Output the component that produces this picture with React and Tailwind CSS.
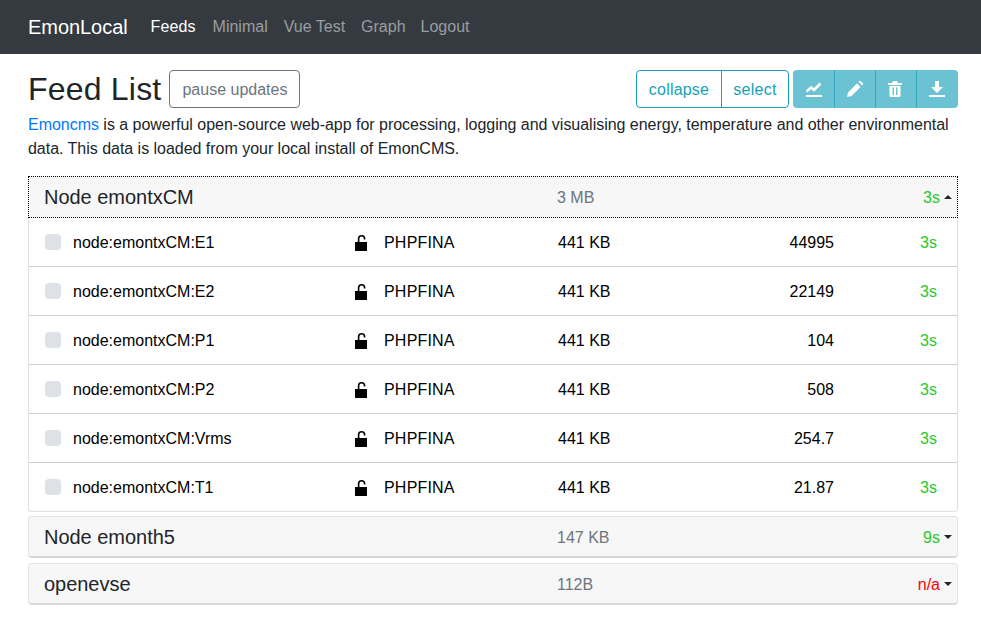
function Lock() {
  return (
    <svg width="14" height="18" viewBox="0 0 14 18" className="block">
      <path d="M1 9h12v8.500a.5.5 0 0 1-.5.5h-11a.5.5 0 0 1-.5-.5z" fill="#000" />
      <path d="M4.600 9V5.800a3 3 0 0 1 6 0v.8" fill="none" stroke="#000" strokeWidth="1.600" />
    </svg>
  );
}

function Caret({ up }) {
  return up ? (
    <span className="ml-1 inline-block w-0 h-0 border-x-[4px] border-x-transparent border-b-[4px] border-b-[#212529]" />
  ) : (
    <span className="ml-1 inline-block w-0 h-0 border-x-[4px] border-x-transparent border-t-[4px] border-t-[#212529]" />
  );
}

const feeds = [
  ["node:emontxCM:E1", "44995"],
  ["node:emontxCM:E2", "22149"],
  ["node:emontxCM:P1", "104"],
  ["node:emontxCM:P2", "508"],
  ["node:emontxCM:Vrms", "254.7"],
  ["node:emontxCM:T1", "21.87"],
];

function GroupHeader({ name, size, time, timeClass, up, className }) {
  return (
    <div className={"flex items-center h-[42px] bg-[#f7f7f7] text-[#212529] " + className}>
      <div className="w-[528px] pl-[15px] text-[20px] leading-[24px] tracking-[-0.03px]">{name}</div>
      <div className="text-[#6c757d] pt-[2px]">{size}</div>
      <div className="ml-auto pr-[5px] flex items-center">
        <span className={"pt-[2px] " + timeClass}>{time}</span>
        <Caret up={up} />
      </div>
    </div>
  );
}

function IconButton({ children, first, last }) {
  return (
    <div
      className={
        "h-[38px] flex items-center justify-center bg-[#6bc2d3] " +
        (first ? "w-[41px] rounded-l-[4px] " : "border-l border-[#33a8bf] ") +
        (last ? "w-[42px] rounded-r-[4px]" : first ? "" : "w-[41px]")
      }
    >
      {children}
    </div>
  );
}

export default function App() {
  return (
    <div className="min-h-[642px] bg-white text-[16px] leading-[24px] text-[#212529] font-['Liberation_Sans',Arial,sans-serif]">
      <nav className="h-[54px] bg-[#343a40] flex items-center pl-[28px]">
        <span className="text-[20px] text-white mr-[23px] tracking-[-0.05px]">EmonLocal</span>
        <div className="flex text-[rgba(255,255,255,0.5)]">
          <span className="text-white mr-[17px] tracking-[0.1px]">Feeds</span>
          <span className="mr-[16px]">Minimal</span>
          <span className="mr-[16px]">Vue Test</span>
          <span className="mr-[15px]">Graph</span>
          <span>Logout</span>
        </div>
      </nav>

      <main className="pl-[28px] pr-[23px] pt-[16px]">
        <div className="flex items-center h-[38px]">
          <h2 className="text-[32px] leading-[38px] mr-[8px] tracking-[0.2px]">Feed List</h2>
          <div className="h-[38px] w-[131px] pt-[2px] flex items-center justify-center border border-[#6c757d] rounded-[4px] text-[#6c757d]">
            pause updates
          </div>
          <div className="ml-auto flex">
            <div className="flex h-[38px] border border-[#17a2b8] rounded-[4px] text-[#17a2b8] items-center">
              <span className="w-[85px] pt-[2px] h-full flex items-center justify-center border-r border-[#17a2b8] tracking-[0.2px]">collapse</span>
              <span className="w-[66px] pt-[2px] h-full flex items-center justify-center tracking-[0.25px]">select</span>
            </div>
            <div className="flex ml-[4px]">
              <IconButton first>
                <svg width="16" height="16" viewBox="0 0 16 16" fill="none" className="block">
                  <rect x="0" y="14" width="16" height="2" fill="#fff" />
                  <path d="M0.500 10.500 5 6.500 8 9 14.500 2.500" stroke="#fff" strokeWidth="2.600" />
                </svg>
              </IconButton>
              <IconButton>
                <svg width="16" height="16" viewBox="0 0 16 16" fill="#fff" className="block">
                  <path d="M0 16l1-4.500L10 2.500l3.500 3.500L4.500 15z" />
                  <path d="M11.500 1l.8-.7a1.200 1.200 0 0 1 1.600 0l1.800 1.800a1.200 1.200 0 0 1 0 1.600l-.7.800z" />
                </svg>
              </IconButton>
              <IconButton>
                <svg width="14" height="16" viewBox="0 0 14 16" fill="#fff" className="block mr-[2px]">
                  <path d="M0 2h4.500V.600C4.500.200 4.800 0 5 0h4c.300 0 .500.200.500.600V2H14v2H0z" />
                  <path fillRule="evenodd" d="M1.500 5h11v9.500a1.500 1.500 0 0 1-1.500 1.500H3a1.500 1.500 0 0 1-1.500-1.500zM4.500 6.500V14H6V6.500zM8 6.500V14h1.500V6.500z" />
                </svg>
              </IconButton>
              <IconButton last>
                <svg width="16" height="16" viewBox="0 0 16 16" fill="#fff" className="block mr-[2px]">
                  <rect x="0" y="14" width="16" height="2" />
                  <path d="M6 0h4v6h4l-6 6-6-6h4z" />
                </svg>
              </IconButton>
            </div>
          </div>
        </div>

        <p className="mt-[5px] tracking-[-0.025px]">
          <span className="text-[#007bff]">Emoncms</span> is a powerful open-source web-app for processing, logging and visualising energy, temperature and other environmental data. This data is loaded from your local install of EmonCMS.
        </p>

        <div className="mt-[15px]">
          <GroupHeader
            name="Node emontxCM"
            size="3 MB"
            time="3s"
            timeClass="text-[#28c928]"
            up
            className="border border-dotted border-black"
          />
          <div className="border-x border-b border-[#dfdfdf] rounded-b-[4px] text-black">
            {feeds.map(([name, value], i) => (
              <div
                key={name}
                className={"flex items-center " + (i < feeds.length - 1 ? "h-[49px] border-b border-[#cfcfcf]" : "h-[48px]")}
              >
                <span className="ml-[16px] w-[16px] h-[16px] rounded-[4px] bg-[#dee2e6]" />
                <span className="ml-[12px] w-[281px] pt-[2px]">{name}</span>
                <span className="w-[30px]"><Lock /></span>
                <span className="w-[174px] pt-[2px] tracking-[0.2px]">PHPFINA</span>
                <span className="w-[100px] pt-[2px]">441 KB</span>
                <span className="w-[176px] pt-[2px] text-right">{value}</span>
                <span className="ml-auto pr-[20px] pt-[2px] text-[#28c928]">3s</span>
              </div>
            ))}
          </div>
          <GroupHeader
            name="Node emonth5"
            size="147 KB"
            time="9s"
            timeClass="text-[#28c928]"
            className="mt-[4px] border border-[#e3e3e3] border-b-2 border-b-[#d8d8d8] rounded-[4px]"
          />
          <GroupHeader
            name="openevse"
            size="112B"
            time="n/a"
            timeClass="text-[#ff0000]"
            className="mt-[5px] border border-[#e3e3e3] border-b-2 border-b-[#d8d8d8] rounded-[4px]"
          />
        </div>
      </main>
    </div>
  );
}
